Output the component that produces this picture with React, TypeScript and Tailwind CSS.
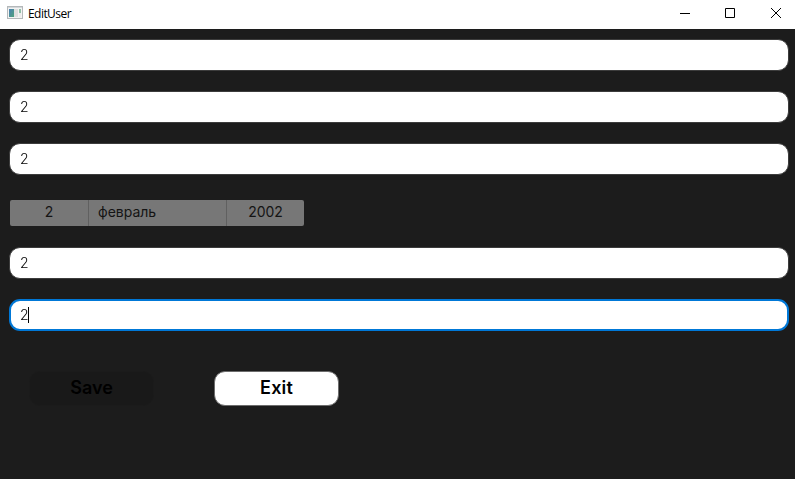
function Field({ value, focused = false }: { value: string; focused?: boolean }) {
  return (
    <div
      className={
        focused
          ? "flex h-8 w-full items-center rounded-[11px] border-2 border-[#0078d7] bg-white pl-[9px] text-sm font-light text-black"
          : "flex h-8 w-full items-center rounded-[11px] border border-[#3c3c3c] bg-white pl-[10px] text-sm font-light text-black"
      }
    >
      <span className="will-change-transform">{value}</span>
      {focused && <span className="-ml-px h-4 w-px bg-black" />}
    </div>
  );
}

function TitleBar() {
  return (
    <header className="flex h-[29px] items-center bg-white">
      <svg className="ml-[7px] -mt-[3px] h-[14px] w-4" viewBox="0 0 16 14" shapeRendering="crispEdges">
        <defs>
          <linearGradient id="pane" x1="0" y1="0" x2="1" y2="1">
            <stop offset="0" stopColor="#4a7fb5" />
            <stop offset="1" stopColor="#4fa27a" />
          </linearGradient>
        </defs>
        <rect x="0.5" y="0.5" width="15" height="12" fill="#f3f3f3" stroke="#b4b8ba" />
        <rect x="1" y="1" width="14" height="1" fill="#d3d7d9" />
        <rect x="2" y="3" width="5" height="8" fill="url(#pane)" />
        <rect x="7" y="3" width="4" height="8" fill="#dedede" />
        <rect x="12" y="3" width="2" height="4" fill="#8fc0a8" />
        <rect x="12" y="7" width="2" height="4" fill="#ececec" />
      </svg>
      <span className="ml-[5px] -mt-[2px] font-['Open_Sans','Noto_Sans',sans-serif] text-[12px] tracking-[-0.55px] text-black">
        EditUser
      </span>
      <svg className="ml-auto mr-[13px] -mt-[3px] h-[12px] w-[102px]" viewBox="0 0 102 12" fill="none" stroke="#000">
        <path d="M0 6.5h10" />
        <path d="M45.5 1.5h9v9h-9z" />
        <path d="M91 1l10 10M101 1L91 11" />
      </svg>
    </header>
  );
}

export default function App() {
  return (
    <div className="h-[479px] w-[795px] overflow-hidden bg-[#1c1c1c] font-[Inter,sans-serif]">
      <TitleBar />
      <main className="flex flex-col gap-5 pt-[10px] pr-[6px] pl-[9px]">
        <Field value="2" />
        <Field value="2" />
        <Field value="2" />
        <div className="flex h-8 items-center pt-[3px] pl-px">
          <div className="flex h-[26px] w-[294px] overflow-hidden rounded-[2px] bg-[#777777] text-sm leading-[23px] text-[#141414]">
            <div className="w-[79px] border-r border-[#606060] text-center">2</div>
            <div className="w-[138px] border-r border-[#606060] pl-[9px]">февраль</div>
            <div className="flex-1 text-center">2002</div>
          </div>
        </div>
        <Field value="2" />
        <Field value="2" focused />
        <div className="flex gap-[60px] pt-5 pl-5">
          <button className="h-[35px] w-[125px] rounded-[11px] border border-[#1b1b1b] bg-[#191919] pb-px text-lg font-semibold text-black">
            <span className="will-change-transform">Save</span>
          </button>
          <button className="h-[35px] w-[125px] rounded-[11px] border border-[#6c6c6c] bg-white pb-px text-lg font-semibold tracking-[0.15px] text-black">
            <span className="will-change-transform">Exit</span>
          </button>
        </div>
      </main>
    </div>
  );
}
